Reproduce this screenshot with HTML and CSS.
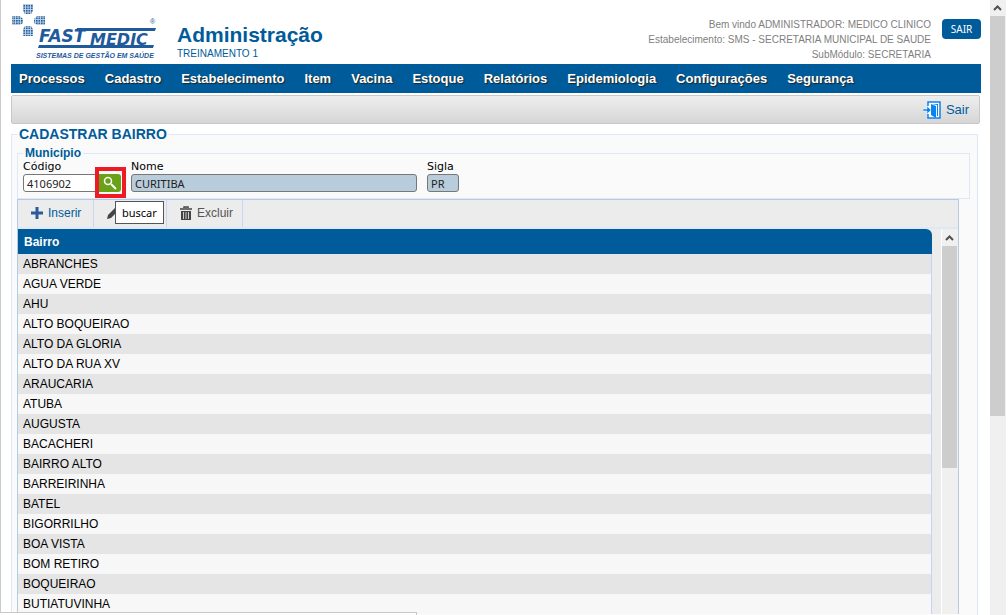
FILE: index.html
```html
<!DOCTYPE html>
<html lang="pt-BR">
<head>
  <meta charset="UTF-8" />
  <meta name="viewport" content="width=device-width, initial-scale=1.0" />
  <title>Cadastrar Bairro</title>
  <link rel="stylesheet" href="styles.css">
</head>
<body>
  <div class="page">
    <header class="header">
      <svg class="logo" width="166" height="64" viewBox="0 0 166 64" role="img" aria-label="Fastmedic">
        <defs>
          <pattern id="dots" width="2.500" height="2.500" patternUnits="userSpaceOnUse">
            <rect width="2.500" height="2.500" fill="#c3d5e8" />
            <rect width="1.600" height="1.600" fill="#1f5a9a" />
          </pattern>
        </defs>
        <path d="M12 4H22V11L20 14H14L12 11Z" fill="url(#dots)" />
        <path d="M1 16H9L12 19V23L9 25H1Z" fill="url(#dots)" />
        <path d="M34 16H26L23 19V23L26 25H34Z" fill="url(#dots)" />
        <path d="M12 36H22V29L20 26H14L12 29Z" fill="url(#dots)" />
        <g class="logo-name">
          <text x="28" y="42" font-size="17">FAST</text>
          <text x="79" y="45" font-size="16">MEDIC</text>
        </g>
        <path d="M66 28H145L144 31H65ZM28 45H143L142 48H27Z" fill="#1f5a9a" />
        <text class="logo-mark" x="139" y="24" font-size="7">®</text>
        <text class="logo-sub" x="25" y="58" font-size="7">SISTEMAS DE GESTÃO EM SAÚDE</text>
      </svg>
      <div class="title">
        <h1>Administração</h1>
        <p>TREINAMENTO 1</p>
      </div>
      <div class="user-info">
        <p>Bem vindo ADMINISTRADOR: MEDICO CLINICO</p>
        <p>Estabelecimento: SMS - SECRETARIA MUNICIPAL DE SAUDE</p>
        <p>SubMódulo: SECRETARIA</p>
      </div>
      <button class="logout" type="button">SAIR</button>
    </header>

    <!-- Menu principal -->
    <nav class="menu">
      <a href="#">Processos</a>
      <a href="#">Cadastro</a>
      <a href="#">Estabelecimento</a>
      <a href="#">Item</a>
      <a href="#">Vacina</a>
      <a href="#">Estoque</a>
      <a href="#">Relatórios</a>
      <a href="#">Epidemiologia</a>
      <a href="#">Configurações</a>
      <a href="#">Segurança</a>
    </nav>

    <div class="toolbar">
      <a href="#">
        <svg width="18" height="18" viewBox="0 0 18 18">
          <path d="M5 5V1H17V17H5V13" fill="#fff" stroke="#0a84f0" stroke-width="1.500" />
          <path d="M8 3L13 5V17L8 14Z" fill="#0a84f0" />
          <path d="M9 3H15V15H14V4Z" fill="#0a84f0" />
          <path d="M0 8H4V5L8 9L4 13V10H0Z" fill="#0a84f0" stroke="#fff" stroke-width="0.500" />
        </svg>
        Sair
      </a>
    </div>

    <fieldset class="form">
      <legend>CADASTRAR BAIRRO</legend>

      <fieldset class="city">
        <legend>Município</legend>
        <div class="fields">
          <div class="field code">
            <label for="codigo">Código</label>
            <div class="search">
              <input type="text" id="codigo" value="4106902" />
              <button type="button" aria-label="buscar">
                <svg width="14" height="14" viewBox="0 0 14 14">
                  <circle cx="5" cy="5" r="3.500" fill="none" stroke="#fff" stroke-width="1.500" />
                  <path d="M8 8L13 13" stroke="#fff" stroke-width="2" />
                </svg>
              </button>
              <span class="highlight"></span>
              <span class="tooltip">buscar</span>
            </div>
          </div>
          <div class="field name">
            <label for="nome">Nome</label>
            <input type="text" id="nome" value="CURITIBA" readonly />
          </div>
          <div class="field state">
            <label for="sigla">Sigla</label>
            <input type="text" id="sigla" value="PR" readonly />
          </div>
        </div>
      </fieldset>

      <div class="panel">
        <div class="actions">
          <button type="button" class="insert">
            <svg width="12" height="12" viewBox="0 0 12 12"><path d="M6 0V12M0 6H12" stroke="#2a5a9a" stroke-width="3" /></svg>
            Inserir
          </button>
          <button type="button" class="edit" aria-label="Alterar">
            <svg width="12" height="12" viewBox="0 0 12 12"><path d="M0 12L1 8L8 1L11 4L4 11Z" fill="#444" /></svg>
          </button>
          <button type="button" class="remove">
            <svg width="12" height="14" viewBox="0 0 12 14">
              <path d="M0 3H12M4 2V1H8V2" fill="none" stroke="#444" stroke-width="1.500" />
              <path d="M1 5H11V14H1Z" fill="#444" />
              <path d="M3.500 6V13M6 6V13M8.500 6V13" stroke="#ccc" />
            </svg>
            Excluir
          </button>
        </div>

        <div class="list">
          <table>
            <thead>
              <tr><th>Bairro</th></tr>
            </thead>
            <tbody>
              <tr><td>ABRANCHES</td></tr>
              <tr><td>AGUA VERDE</td></tr>
              <tr><td>AHU</td></tr>
              <tr><td>ALTO BOQUEIRAO</td></tr>
              <tr><td>ALTO DA GLORIA</td></tr>
              <tr><td>ALTO DA RUA XV</td></tr>
              <tr><td>ARAUCARIA</td></tr>
              <tr><td>ATUBA</td></tr>
              <tr><td>AUGUSTA</td></tr>
              <tr><td>BACACHERI</td></tr>
              <tr><td>BAIRRO ALTO</td></tr>
              <tr><td>BARREIRINHA</td></tr>
              <tr><td>BATEL</td></tr>
              <tr><td>BIGORRILHO</td></tr>
              <tr><td>BOA VISTA</td></tr>
              <tr><td>BOM RETIRO</td></tr>
              <tr><td>BOQUEIRAO</td></tr>
              <tr><td>BUTIATUVINHA</td></tr>
            </tbody>
          </table>
          <div class="scrollbar list-scroll">
            <svg width="15" height="17" viewBox="0 0 15 17"><path d="M4 11L7.500 7.500L11 11" fill="none" stroke="#505050" stroke-width="2" /></svg>
            <div class="thumb"></div>
          </div>
        </div>
      </div>
    </fieldset>
  </div>

  <div class="scrollbar page-scroll">
    <svg width="15" height="16" viewBox="0 0 15 16"><path d="M4 10L7.500 6.500L11 10" fill="none" stroke="#505050" stroke-width="2" /></svg>
    <div class="thumb"></div>
  </div>

  <div class="status"></div>
</body>
</html>
```

FILE: styles.css
```css
* {
  margin: 0;
  padding: 0;
  box-sizing: border-box;
}

body {
  display: flex;
  height: 100vh;
  overflow: hidden;
  padding-right: 2px;
  background: #fff;
  font-family: "Liberation Sans", Arial, sans-serif;
  font-size: 12px;
  color: #000;
}

a {
  color: inherit;
  text-decoration: none;
}

button {
  border: none;
  font-family: inherit;
  cursor: pointer;
}

.page {
  flex: 1;
  min-width: 0;
  display: flex;
  flex-direction: column;
  padding: 0 9px 0 10px;
  border-left: 1px solid #ccc;
}

/* Header */
.header {
  flex: none;
  display: flex;
  height: 64px;
}

.logo-name {
  fill: #1f5a9a;
  font-family: "DejaVu Sans", Verdana, sans-serif;
  font-weight: bold;
  font-style: italic;
}

.logo-mark {
  fill: #1f5a9a;
}

.logo-sub {
  fill: #1f5a9a;
  font-weight: bold;
  font-style: italic;
}

.title {
  padding-top: 22px;
  color: #005b9a;
}

.title h1 {
  font-size: 21px;
  line-height: 25px;
}

.title p {
  font-size: 10px;
  line-height: 14px;
}

.user-info {
  margin-left: auto;
  padding: 17px 11px 0 0;
  text-align: right;
  font-size: 10px;
  line-height: 15px;
  color: #808080;
}

.logout {
  width: 39px;
  height: 20px;
  margin-top: 19px;
  border-radius: 4px;
  background: #005b9a;
  font-family: "Noto Sans", sans-serif;
  font-size: 10px;
  color: #fff;
}

/* Main menu */
.menu {
  flex: none;
  display: flex;
  gap: 20px;
  height: 29px;
  padding-left: 8px;
  background: #005b9a;
  font-size: 13px;
  font-weight: bold;
  line-height: 29px;
  color: #fff;
  text-shadow: 1px 1px 1px #222;
}

.toolbar {
  flex: none;
  display: flex;
  justify-content: flex-end;
  height: 29px;
  margin: 2px 1px 0 0;
  padding-right: 10px;
  border: 1px solid #c8c8c8;
  border-radius: 2px;
  background: linear-gradient(#eee, #d6d6d6);
}

.toolbar a {
  display: flex;
  align-items: center;
  gap: 5px;
  font-size: 13px;
  color: #005b9a;
}

/* Form */
.form {
  flex: 1;
  min-height: 0;
  min-width: 0;
  margin: 2px 3px 0 0;
  padding: 0 7px 0 5px;
  border: 1px solid #dfe8f6;
  border-bottom: none;
  background: #fafafa;
}

legend {
  padding: 0 2px;
  font-weight: bold;
  color: #005b9a;
}

.form > legend {
  font-size: 14px;
  line-height: 16px;
}

.city {
  min-width: 0;
  margin-top: 4px;
  padding: 0 5px 6px;
  border: 1px solid #dfe8f6;
}

.city legend {
  font-size: 12px;
  line-height: 14px;
}

.fields {
  display: flex;
  gap: 10px;
}

.field {
  display: flex;
  flex-direction: column;
}

.field label {
  font-family: "DejaVu Sans", Verdana, sans-serif;
  font-size: 11px;
  line-height: 14px;
}

.field input {
  width: 100%;
  height: 18px;
  padding: 0 3px;
  border: 1px solid #777;
  border-radius: 3px;
  background: #fff;
  font-family: "Noto Sans", Tahoma, sans-serif;
  font-size: 11px;
  color: #222;
}

.field input[readonly] {
  background: #b8ccdc;
}

.code {
  width: 98px;
}

.name {
  width: 286px;
}

.state {
  width: 32px;
}

.search {
  position: relative;
  display: flex;
}

.search input {
  border-radius: 3px 0 0 3px;
}

.search button {
  flex: none;
  display: flex;
  align-items: center;
  justify-content: center;
  width: 22px;
  height: 18px;
  border-radius: 0 3px 3px 0;
  background: #69a118;
}

.highlight {
  position: absolute;
  top: -7px;
  right: -5px;
  width: 31px;
  height: 31px;
  border: 4px solid #ed1c24;
}

.tooltip {
  position: absolute;
  z-index: 1;
  top: 27px;
  left: 92px;
  padding: 0 6px;
  border: 1px solid #555;
  background: #fff;
  font-family: "Noto Sans", "Segoe UI", sans-serif;
  font-size: 11px;
  line-height: 21px;
}

/* List panel */
.panel {
  margin-right: 11px;
  border: 1px solid #b5cbe0;
  border-bottom: none;
  background: #ececec;
}

.actions {
  display: flex;
  height: 29px;
  border-bottom: 2px solid #dfe8f6;
}

.actions button {
  display: flex;
  align-items: center;
  gap: 5px;
  width: 76px;
  padding: 0 0 2px 13px;
  border-right: 1px solid #c8d8f4;
  background: none;
  font-size: 12px;
  color: #555;
}

.actions .insert {
  color: #005b9a;
}

.actions .edit {
  width: 73px;
}

.list {
  display: flex;
}

table {
  flex: 1;
  border-spacing: 0;
}

th {
  height: 25px;
  padding-left: 6px;
  border-radius: 0 6px 0 0;
  background: #005b9a;
  text-align: left;
  color: #fff;
}

td {
  height: 20px;
  padding-left: 5px;
  border-right: 1px solid #c5d3fa;
  background: #f7f7f7;
}

tbody tr:nth-child(odd) td {
  background: #e5e5e5;
}

/* Scrollbars */
.scrollbar {
  flex: none;
  width: 16px;
  background: #f0f0f0;
}

.scrollbar svg {
  display: block;
}

.scrollbar .thumb {
  width: 15px;
  background: #cdcdcd;
}

.list-scroll {
  width: 17px;
  margin-left: 9px;
  border-left: 1px solid #fff;
}

.list-scroll .thumb {
  height: 222px;
}

.page-scroll .thumb {
  height: 65%;
}

.status {
  position: absolute;
  bottom: 0;
  left: 0;
  width: 417px;
  height: 3px;
  border: 1px solid #c8c8c8;
  border-width: 1px 1px 0 0;
  background: #fff;
}
```
